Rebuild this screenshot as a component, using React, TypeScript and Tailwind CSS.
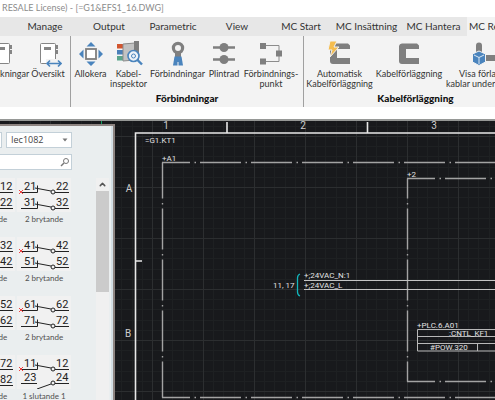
import type { ReactNode } from "react";
import { ChevronUp } from "lucide-react";

const tabs = [
  { name: "Manage", width: "w-16" },
  { name: "Output", width: "w-16" },
  { name: "Parametric", width: "w-16" },
  { name: "View", width: "w-16" },
  { name: "MC Start", width: "w-16" },
  { name: "MC Insättning", width: "w-[67px]" },
  { name: "MC Hantera", width: "w-[67px]" },
];

const contacts = [
  { left: ["11", "12", "21", "22"], right: ["21", "22", "31", "32"] },
  { left: ["31", "32", "41", "42"], right: ["41", "42", "51", "52"] },
  { left: ["51", "52", "61", "62"], right: ["61", "62", "71", "72"] },
  { left: ["71", "72", "81", "82"], right: ["11", "12", "23", "24"], mixed: true },
];

function Icon({ children }: { children: ReactNode }) {
  return (
    <svg className="mb-px h-7 w-7 shrink-0" viewBox="0 0 28 28" fill="none" aria-hidden="true">
      {children}
    </svg>
  );
}

function DocIcon({ arrow }: { arrow?: boolean }) {
  return (
    <Icon>
      <rect x="6.5" y="3.5" width="15" height="20" rx="1" fill="#fff" stroke="#858585" />
      <rect x="10" y="7" width="7" height="3" fill="#858585" />
      <path d="M22 5h2v4h-2zM22 10h2v4h-2z" fill="#858585" />
      {arrow && (
        <>
          <path d="M12 19h16v9H12z" fill="#f3f3f3" />
          <path d="M13 23.500h14M16 20.500l-3 3 3 3M24 20.500l3 3-3 3" stroke="#4a84bd" strokeWidth="1.600" />
        </>
      )}
    </Icon>
  );
}

function AllocateIcon() {
  return (
    <Icon>
      <rect x="9" y="9" width="10" height="10" fill="#fff" stroke="#7f7f7f" strokeWidth="1.800" />
      <path d="M14 2l4.500 4.500h-9zM14 26l4.500-4.500h-9zM2 14l4.500-4.500v9zM26 14l-4.500-4.500v9z" fill="#4a84bd" />
    </Icon>
  );
}

function InspectorIcon() {
  return (
    <Icon>
      <path d="M2 4h6v4.500H2z" fill="#d2552f" />
      <path d="M2 10h6v4.500H2z" fill="#4a7fb8" />
      <path d="M2 16h6v4.500H2z" fill="#5aa58c" />
      <path d="M8 4l12-1v17l-12 1z" fill="#c2c2c2" stroke="#8b8b8b" />
      <path d="M19 1h5v20h-5z" fill="#7d7d7d" />
      <circle cx="18.500" cy="16" r="5.500" fill="#eef3f8" stroke="#4a84bd" strokeWidth="1.600" />
      <circle cx="18.500" cy="16" r="2" stroke="#4a84bd" />
      <path d="M22.500 20l4.500 4.500" stroke="#4a84bd" strokeWidth="2.400" />
    </Icon>
  );
}

function LugIcon() {
  return (
    <Icon>
      <circle cx="14" cy="8" r="4.600" stroke="#7f7f7f" strokeWidth="3.200" />
      <path d="M11 13h6v5h-6z" fill="#7f7f7f" />
      <path d="M10.500 16.500h7l1.500 9H9z" fill="#4a84bd" />
      <path d="M14 22v4" stroke="#f3f3f3" />
    </Icon>
  );
}

function TerminalIcon() {
  return (
    <Icon>
      <path d="M3 7.500h22M3 19.500h22" stroke="#7f7f7f" strokeWidth="2.600" />
      <circle cx="14" cy="7.500" r="4.500" fill="#7f7f7f" />
      <circle cx="14" cy="19.500" r="4.500" fill="#7f7f7f" />
    </Icon>
  );
}

function NodeIcon() {
  return (
    <Icon>
      <path d="M7 5.500h15v16H7" stroke="#8c8c8c" />
      <path d="M3 3h6v6H3zM3 18.500h6v6H3zM19 10.500h6v6h-6z" fill="#7f7f7f" />
    </Icon>
  );
}

function TrunkIcon({ auto }: { auto?: boolean }) {
  return (
    <Icon>
      <path d="M22 3.500l2 2V9H11v9h13v6H7a3 3 0 0 1-3-3V6a3 3 0 0 1 3-2.500z" fill="#7f7f7f" />
      {auto && (
        <path d="M4 1h7l-3 6h5L4 17l2-7H2z" fill="#f5bd4f" stroke="#f3f3f3" />
      )}
    </Icon>
  );
}

function ShowCablesIcon() {
  return (
    <Icon>
      <path d="M4 14V5.500a3 3 0 0 1 6 0V14zM13 15h15v6H13z" fill="#7f7f7f" />
      <path d="M7 11l6.500 3v8L7 25.500.5 22v-8z" fill="#4a84bd" stroke="#f3f3f3" />
      <path d="M2 15l5 2.500 5-2.500M7 17.500V24" stroke="#dce8f3" />
    </Icon>
  );
}

function Tool({ icon, label, width }: { icon: ReactNode; label: string[]; width: string }) {
  return (
    <button type="button" className={`flex shrink-0 flex-col items-center whitespace-nowrap ${width}`}>
      {icon}
      {label.map((line) => (
        <span key={line} className="text-[9px] leading-[10px]">{line}</span>
      ))}
    </button>
  );
}

function Group({ title, className, children }: { title?: string; className: string; children: ReactNode }) {
  return (
    <section className={`flex shrink-0 flex-col pt-1 ${className}`}>
      <div className="flex h-[52px] items-start">{children}</div>
      {title && <h2 className="text-center text-[10px] leading-3 font-black text-[#111]">{title}</h2>}
    </section>
  );
}

function ContactSymbol({ pins, mixed }: { pins: string[]; mixed?: boolean }) {
  return (
    <svg className="h-[34px] w-[54px]" fill="none" stroke="#222" aria-hidden="true">
      <rect width="54" height="34" fill="#f1f1f1" stroke="none" />
      <path d="M4 14.500h16.500v-7M18 10l16 3M38 14.500h14" />
      <circle cx="36" cy="14" r="2" />
      <path d="M2 12l4 4M6 12l-4 4" stroke="#f04040" />
      {mixed ? (
        <path d="M4 28.500h16M20 34l14-5M38 28.500h14" />
      ) : (
        <path d="M4 30.500h16.500v-7M18 26l16 3M38 30.500h14" />
      )}
      <circle cx="36" cy={mixed ? 28 : 30} r="2" />
      <g fill="#222" stroke="none" fontSize="11" fontFamily="Roboto, sans-serif">
        <text x="7" y="12">{pins[0]}</text>
        <text x="39" y="12">{pins[1]}</text>
        <text x="7" y={mixed ? 26 : 28}>{pins[2]}</text>
        <text x="39" y={mixed ? 26 : 28}>{pins[3]}</text>
      </g>
    </svg>
  );
}

function ContactItem({ pins, label, mixed }: { pins: string[]; label: string; mixed?: boolean }) {
  return (
    <button type="button" className="flex h-[59px] w-[54px] shrink-0 flex-col items-center">
      <ContactSymbol pins={pins} mixed={mixed} />
      <span className="mt-0.5 text-[8px] leading-[10px] whitespace-nowrap text-[#505050]">{label}</span>
    </button>
  );
}

function Palette() {
  return (
    <aside className="z-10 mt-[3px] flex w-[115px] flex-col overflow-hidden border-t-2 border-r-2 border-[#8d8481] bg-[#eaeeef] [grid-area:1/1]">
      <div className="flex min-h-0 flex-1 flex-col border-r-2 border-[#d3dee4] pt-1.5">
        <div className="flex gap-1">
          <span className="h-4 w-0.5 border-y border-r border-[#c3d0d8] bg-white" />
          <div className="relative">
            <select
              aria-label="Standard"
              className="block h-4 w-[66px] appearance-none border border-[#c3d0d8] bg-white pl-1 font-['Open_Sans',sans-serif] text-[9px] leading-[14px] text-[#444]"
            >
              <option>Iec1082</option>
            </select>
            <svg className="pointer-events-none absolute top-1.5 right-1 h-1 w-1.5" viewBox="0 0 6 4" aria-hidden="true">
              <path d="M0.500 0.500h5L3 3.500z" fill="#777" />
            </svg>
          </div>
        </div>
        <div className="relative mt-1.5 w-[72px]">
          <input
            type="search"
            aria-label="Search symbols"
            className="block h-4 w-full appearance-none border-y border-r border-[#c3d0d8] bg-white pr-4 text-[9px]"
          />
          <svg className="pointer-events-none absolute top-[3px] right-0.5 h-2.5 w-2.5" viewBox="0 0 10 10" fill="none" aria-hidden="true">
            <circle cx="6" cy="4" r="2.500" stroke="#777" />
            <path d="M4 6L1 9" stroke="#777" strokeWidth="1.500" />
          </svg>
        </div>
        <div className="mt-2 flex min-h-0 flex-1 justify-between">
          <ul className="-ml-[39px]">
            {contacts.map((row, i) => (
              <li key={i} className="flex gap-0.5">
                <ContactItem pins={row.left} label="2 brytande" />
                <ContactItem
                  pins={row.right}
                  label={row.mixed ? "1 slutande 1" : "2 brytande"}
                  mixed={row.mixed}
                />
              </li>
            ))}
          </ul>
          <div className="mr-0.5 flex w-[13px] flex-col bg-[#f0f0f0]">
            <button type="button" aria-label="Scroll up" className="flex h-[13px] items-center justify-center">
              <ChevronUp size={9} strokeWidth={4} color="#555" />
            </button>
            <div className="h-[101px] bg-[#cbcbcb]" />
          </div>
        </div>
      </div>
    </aside>
  );
}

function Drawing() {
  return (
    <svg
      className="h-full w-full bg-[#18191c] [grid-area:1/1]"
      fill="none"
      fontFamily="Roboto, sans-serif"
      role="img"
      aria-label="Circuit diagram"
    >
      <defs>
        <pattern id="grid" x="50" y="15" width="51" height="51" patternUnits="userSpaceOnUse">
          <path
            d="M10.500 0v51M20.500 0v51M31.500 0v51M41.500 0v51M0 10.500h51M0 20.500h51M0 31.500h51M0 41.500h51"
            stroke="#1e2022"
          />
          <path d="M0.500 0v51M0 0.500h51" stroke="#2c2e30" />
        </pattern>
      </defs>
      <rect width="100%" height="100%" fill="url(#grid)" />
      <path d="M101.500 0v4" stroke="#12a060" />

      {/* Sheet frame with zone marks */}
      <path d="M2000 12H135.500V2000M227 1v11M367.500 1v11M136 140h6" stroke="#e8e8e8" strokeWidth="1.600" />
      <g fill="#cfcfcf" fontSize="10" textAnchor="middle">
        <text x="166" y="8">1</text>
        <text x="303" y="8">2</text>
        <text x="434" y="8">3</text>
        <text x="129" y="71">A</text>
        <text x="128" y="216">B</text>
      </g>

      {/* Location boxes */}
      <g stroke="#a3a3a3" strokeWidth="1.400" strokeDasharray="41 4.500 1.500 4">
        <path d="M162 41.500H2000M162 276.500H2000M407 57.500H2000M407 260.500H2000" strokeDashoffset="13" />
        <path d="M162.500 41.500V276.500" strokeDashoffset="5" />
        <path d="M407.500 57.500V260.500" strokeDashoffset="21" />
      </g>

      {/* Supply lines and PLC block */}
      <path d="M304 159.500H2000M304 168.500H2000" stroke="#c4c4c4" />
      <path d="M300 153q-2.500 1-2.500 4v14q0 3 2.500 4" stroke="#12b5bb" strokeWidth="1.300" />
      <path d="M2000 208.500H417.500v21.500H2000M417 215.500H2000M417 222.500H2000M477.500 222v8" stroke="#b8b8b8" />

      <g fill="#e2e2e2" fontSize="8">
        <text x="145" y="22">=G1.KT1</text>
        <text x="162" y="40">+A1</text>
        <text x="407" y="56">+2</text>
        <text x="273" y="167">11, 17</text>
        <text x="304" y="157">+;24VAC_N:1</text>
        <text x="304" y="167">+;24VAC_L</text>
        <text x="417" y="207">+PLC.6.A01</text>
        <text x="449" y="215">:CNTL_KF1</text>
        <text x="430" y="229">#POW.320</text>
      </g>
    </svg>
  );
}

export default function App() {
  return (
    <div className="flex h-screen flex-col overflow-hidden bg-white font-[Lato,sans-serif] text-[#333]">
      <header className="h-[17px] pl-0.5 text-[9px] leading-4 whitespace-nowrap text-[#8c8c8c]">
        RESALE License) - [=G1&amp;EFS1_16.DWG]
      </header>

      <nav className="flex h-[19px] shrink-0 overflow-hidden bg-[#e7e7e7] pl-[13px] text-[10px] whitespace-nowrap">
        {tabs.map((tab) => (
          <button key={tab.name} type="button" className={`shrink-0 text-center ${tab.width}`}>
            {tab.name}
          </button>
        ))}
        <button type="button" className="flex-1 bg-[#f3f3f3] pl-0.5 text-left">
          MC Re
        </button>
      </nav>

      <div className="flex h-[71px] shrink-0 overflow-hidden bg-[#f3f3f3]">
        <Group className="w-[71px] items-end overflow-hidden border-r border-[#a0a0a0]">
          <Tool icon={<DocIcon />} label={["Förteckningar"]} width="w-12" />
          <Tool icon={<DocIcon arrow />} label={["Översikt"]} width="w-11" />
        </Group>
        <Group title="Förbindningar" className="w-[233px] border-r border-[#a0a0a0]">
          <Tool icon={<AllocateIcon />} label={["Allokera"]} width="w-[39px]" />
          <Tool icon={<InspectorIcon />} label={["Kabel-", "inspektor"]} width="w-[37px]" />
          <Tool icon={<LugIcon />} label={["Förbindningar"]} width="w-[61px]" />
          <Tool icon={<TerminalIcon />} label={["Plintrad"]} width="w-8" />
          <Tool icon={<NodeIcon />} label={["Förbindnings-", "punkt"]} width="w-[62px]" />
        </Group>
        <Group title="Kabelförläggning" className="w-[223px]">
          <Tool icon={<TrunkIcon auto />} label={["Automatisk", "Kabelförläggning"]} width="w-[71px]" />
          <Tool icon={<TrunkIcon />} label={["Kabelförläggning"]} width="w-[68px]" />
          <button type="button" className="w-[84px] pl-[3px] text-left text-[9px] leading-[10px] whitespace-nowrap">
            <span className="block pl-[26px]">
              <ShowCablesIcon />
            </span>
            <span className="block pl-[13px]">Visa förlag</span>
            <span className="block">kablar under</span>
          </button>
        </Group>
      </div>

      <main className="mt-3 grid min-h-0 flex-1 grid-cols-1 grid-rows-1 overflow-hidden border-t-2 border-[#969896]">
        <Drawing />
        <Palette />
      </main>
    </div>
  );
}
